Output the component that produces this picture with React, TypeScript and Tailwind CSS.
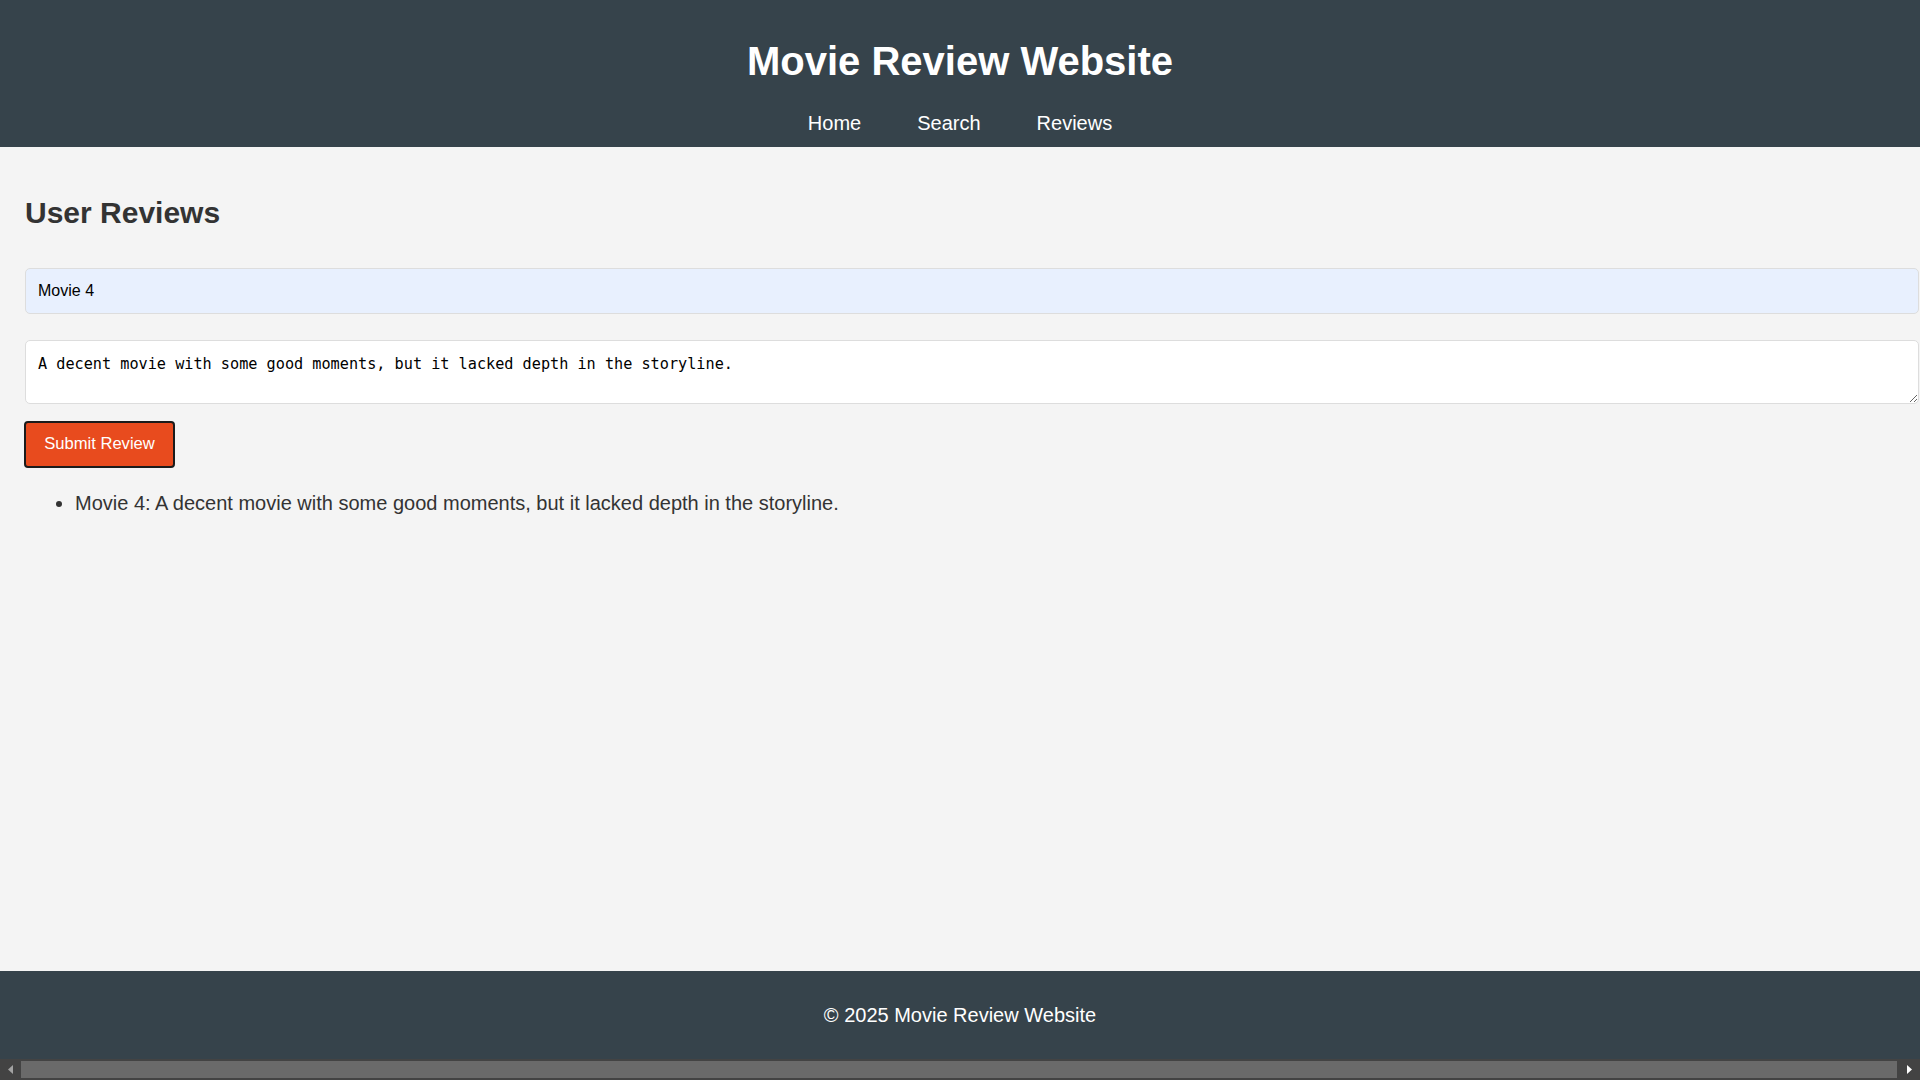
import { useState } from "react";

const sans = "font-['Liberation_Sans',Arial,sans-serif]";

export default function App() {
  const [title, setTitle] = useState("Movie 4");
  const [text, setText] = useState(
    "A decent movie with some good moments, but it lacked depth in the storyline."
  );
  const reviews = [
    {
      movie: "Movie 4",
      text: "A decent movie with some good moments, but it lacked depth in the storyline.",
    },
  ];

  return (
    <div className={`flex h-screen flex-col overflow-hidden bg-[#f4f4f4] ${sans}`}>
      {/* header */}
      <header className="flex flex-col items-center bg-[#36434b] pt-[38px] pb-[12px] text-white">
        <h1 className="text-[40px] leading-[46px] font-bold">Movie Review Website</h1>
        <nav className="mt-[28px] flex gap-[56px] text-[20px] leading-[23px]">
          <a href="#">Home</a>
          <a href="#">Search</a>
          <a href="#">Reviews</a>
        </nav>
      </header>

      {/* main */}
      <main className="flex-1 pt-[49px] pl-[25px] pr-px text-[#333]">
        <h2 className="text-[30px] leading-[34px] font-bold">User Reviews</h2>

        <input
          value={title}
          onChange={(e) => setTitle(e.target.value)}
          className={`mt-[38px] block h-[46px] w-full rounded-[5px] border border-[#ddd] bg-[#e8f0fe] px-[12px] text-[16px] text-black outline-none ${sans}`}
        />

        <textarea
          value={text}
          onChange={(e) => setText(e.target.value)}
          className="mt-[26px] block h-[64px] w-full rounded-[5px] border border-[#ddd] bg-white px-[12px] pt-[14px] font-['DejaVu_Sans_Mono',monospace] text-[15.2px] leading-[18px] text-black outline-none"
        />

        <button className="-ml-px mt-[17px] h-[47px] w-[151px] rounded-[4px] border-2 border-[#1b1b1b] bg-[#e84b1e] text-[16.6px] text-white">
          Submit Review
        </button>

        <ul className="mt-[24px] list-disc pl-[50px] text-[20px] leading-[23px]">
          {reviews.map((r, i) => (
            <li key={i}>
              {r.movie}: {r.text}
            </li>
          ))}
        </ul>
      </main>

      {/* footer */}
      <footer className="flex h-[88px] items-center justify-center bg-[#36434b] text-[20px] text-white">
        © 2025 Movie Review Website
      </footer>

      {/* horizontal scrollbar */}
      <div className="flex h-[21px] bg-[#434343]">
        <div className="flex w-[21px] items-center justify-center">
          <svg width="6" height="9" viewBox="0 0 6 9">
            <path d="M5 0 L0 4.5 L5 9 Z" fill="#a3a3a3" />
          </svg>
        </div>
        <div className="my-[2px] flex-1 bg-[#6a6a6a]" />
        <div className="flex w-[23px] items-center justify-center">
          <svg width="6" height="9" viewBox="0 0 6 9">
            <path d="M1 0 L6 4.5 L1 9 Z" fill="#ffffff" />
          </svg>
        </div>
      </div>
    </div>
  );
}
